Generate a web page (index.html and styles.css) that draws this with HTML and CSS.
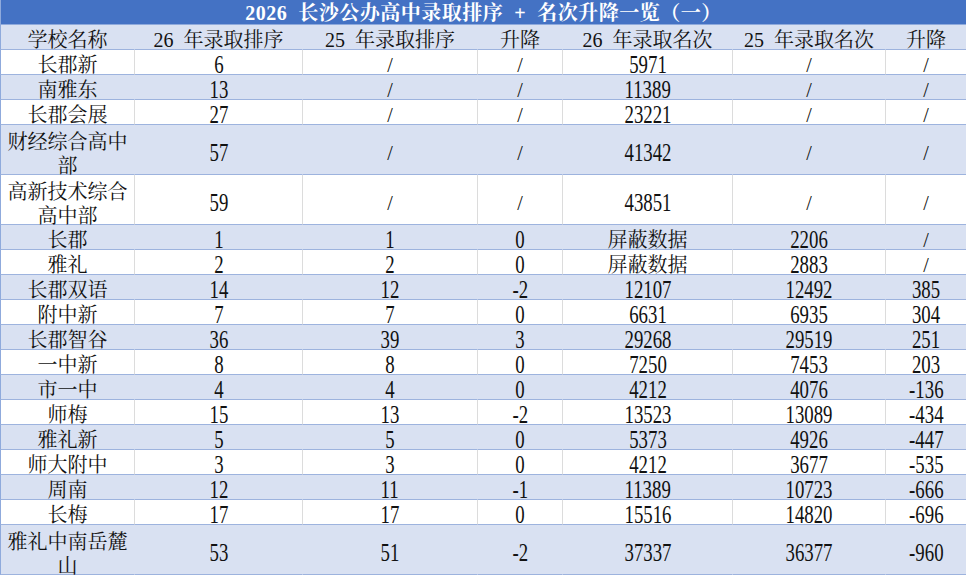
FILE: index.html
```html
<!DOCTYPE html>
<html lang="zh-CN">
<head>
<meta charset="utf-8">
<title>2026 长沙公办高中录取排序</title>
<link rel="stylesheet" href="styles.css">
</head>
<body>
<table class="sheet">
  <colgroup>
    <col class="c1"><col class="c2"><col class="c3"><col class="c4"><col class="c5"><col class="c6"><col class="c7">
  </colgroup>
  <thead>
    <tr class="title"><th colspan="7">2026&nbsp; 长沙公办高中录取排序 &nbsp;+&nbsp; 名次升降一览（一）</th></tr>
    <tr class="head">
      <th>学校名称</th><th>26 年录取排序</th><th>25 年录取排序</th><th>升降</th><th>26 年录取名次</th><th>25 年录取名次</th><th>升降</th>
    </tr>
  </thead>
  <tbody>
    <tr><td>长郡新</td><td><span class="n">6</span></td><td>/</td><td>/</td><td><span class="n">5971</span></td><td>/</td><td>/</td></tr>
    <tr><td>南雅东</td><td><span class="n">13</span></td><td>/</td><td>/</td><td><span class="n">11389</span></td><td>/</td><td>/</td></tr>
    <tr><td>长郡会展</td><td><span class="n">27</span></td><td>/</td><td>/</td><td><span class="n">23221</span></td><td>/</td><td>/</td></tr>
    <tr class="tall"><td><div class="two">财经综合高中部</div></td><td><span class="n">57</span></td><td>/</td><td>/</td><td><span class="n">41342</span></td><td>/</td><td>/</td></tr>
    <tr class="tall"><td><div class="two">高新技术综合高中部</div></td><td><span class="n">59</span></td><td>/</td><td>/</td><td><span class="n">43851</span></td><td>/</td><td>/</td></tr>
    <tr><td>长郡</td><td><span class="n">1</span></td><td><span class="n">1</span></td><td><span class="n">0</span></td><td>屏蔽数据</td><td><span class="n">2206</span></td><td>/</td></tr>
    <tr><td>雅礼</td><td><span class="n">2</span></td><td><span class="n">2</span></td><td><span class="n">0</span></td><td>屏蔽数据</td><td><span class="n">2883</span></td><td>/</td></tr>
    <tr><td>长郡双语</td><td><span class="n">14</span></td><td><span class="n">12</span></td><td><span class="n">-2</span></td><td><span class="n">12107</span></td><td><span class="n">12492</span></td><td><span class="n">385</span></td></tr>
    <tr><td>附中新</td><td><span class="n">7</span></td><td><span class="n">7</span></td><td><span class="n">0</span></td><td><span class="n">6631</span></td><td><span class="n">6935</span></td><td><span class="n">304</span></td></tr>
    <tr><td>长郡智谷</td><td><span class="n">36</span></td><td><span class="n">39</span></td><td><span class="n">3</span></td><td><span class="n">29268</span></td><td><span class="n">29519</span></td><td><span class="n">251</span></td></tr>
    <tr><td>一中新</td><td><span class="n">8</span></td><td><span class="n">8</span></td><td><span class="n">0</span></td><td><span class="n">7250</span></td><td><span class="n">7453</span></td><td><span class="n">203</span></td></tr>
    <tr><td>市一中</td><td><span class="n">4</span></td><td><span class="n">4</span></td><td><span class="n">0</span></td><td><span class="n">4212</span></td><td><span class="n">4076</span></td><td><span class="n">-136</span></td></tr>
    <tr><td>师梅</td><td><span class="n">15</span></td><td><span class="n">13</span></td><td><span class="n">-2</span></td><td><span class="n">13523</span></td><td><span class="n">13089</span></td><td><span class="n">-434</span></td></tr>
    <tr><td>雅礼新</td><td><span class="n">5</span></td><td><span class="n">5</span></td><td><span class="n">0</span></td><td><span class="n">5373</span></td><td><span class="n">4926</span></td><td><span class="n">-447</span></td></tr>
    <tr><td>师大附中</td><td><span class="n">3</span></td><td><span class="n">3</span></td><td><span class="n">0</span></td><td><span class="n">4212</span></td><td><span class="n">3677</span></td><td><span class="n">-535</span></td></tr>
    <tr><td>周南</td><td><span class="n">12</span></td><td><span class="n">11</span></td><td><span class="n">-1</span></td><td><span class="n">11389</span></td><td><span class="n">10723</span></td><td><span class="n">-666</span></td></tr>
    <tr><td>长梅</td><td><span class="n">17</span></td><td><span class="n">17</span></td><td><span class="n">0</span></td><td><span class="n">15516</span></td><td><span class="n">14820</span></td><td><span class="n">-696</span></td></tr>
    <tr class="tall"><td><div class="two">雅礼中南岳麓山</div></td><td><span class="n">53</span></td><td><span class="n">51</span></td><td><span class="n">-2</span></td><td><span class="n">37337</span></td><td><span class="n">36377</span></td><td><span class="n">-960</span></td></tr>
  </tbody>
</table>
</body>
</html>
```

FILE: styles.css
```css
html, body {
  margin: 0;
  padding: 0;
  background: #ffffff;
}

.sheet {
  width: 966px;
  table-layout: fixed;
  border-collapse: separate;
  border-spacing: 0;
  font-family: "Liberation Serif", "Noto Serif CJK SC", "Noto Sans CJK SC", serif;
  font-size: 20px;
  color: #111111;
}

.c1 { width: 135px; }
.c2 { width: 168px; }
.c3 { width: 175px; }
.c4 { width: 85px; }
.c5 { width: 170px; }
.c6 { width: 153px; }
.c7 { width: 80px; }

.sheet th,
.sheet td {
  padding: 6px 0 0;
  text-align: center;
  vertical-align: middle;
  font-weight: normal;
  line-height: 18px;
  border-bottom: 1px solid #9db3de;
  border-right: 1px solid #dcdcdc;
  white-space: normal;
}

.sheet th:first-child,
.sheet td:first-child {
  border-left: 1px solid #8faadc;
}

.sheet th:last-child,
.sheet td:last-child {
  border-right: none;
}

.title th {
  background: #4472c4;
  color: #ffffff;
  font-weight: bold;
  border-bottom: 1px solid #8faadc;
  border-left: none;
  letter-spacing: 0.5px;
  padding-top: 3px;
  line-height: 21px;
}

.head th {
  background: #d9e1f2;
  border-right-color: #d9e1f2;
  word-spacing: 5px;
}

tbody tr:nth-child(even) td {
  background: #d9e1f2;
  border-right-color: #d9e1f2;
}

.tall td {
  padding-top: 8px;
  line-height: 20.5px;
}

.two {
  line-height: 23.5px;
  margin-top: -2px;
  margin-bottom: -4px;
}

.n {
  display: inline-block;
  transform: translateY(-0.5px) scale(0.94, 1.22);
}
```
